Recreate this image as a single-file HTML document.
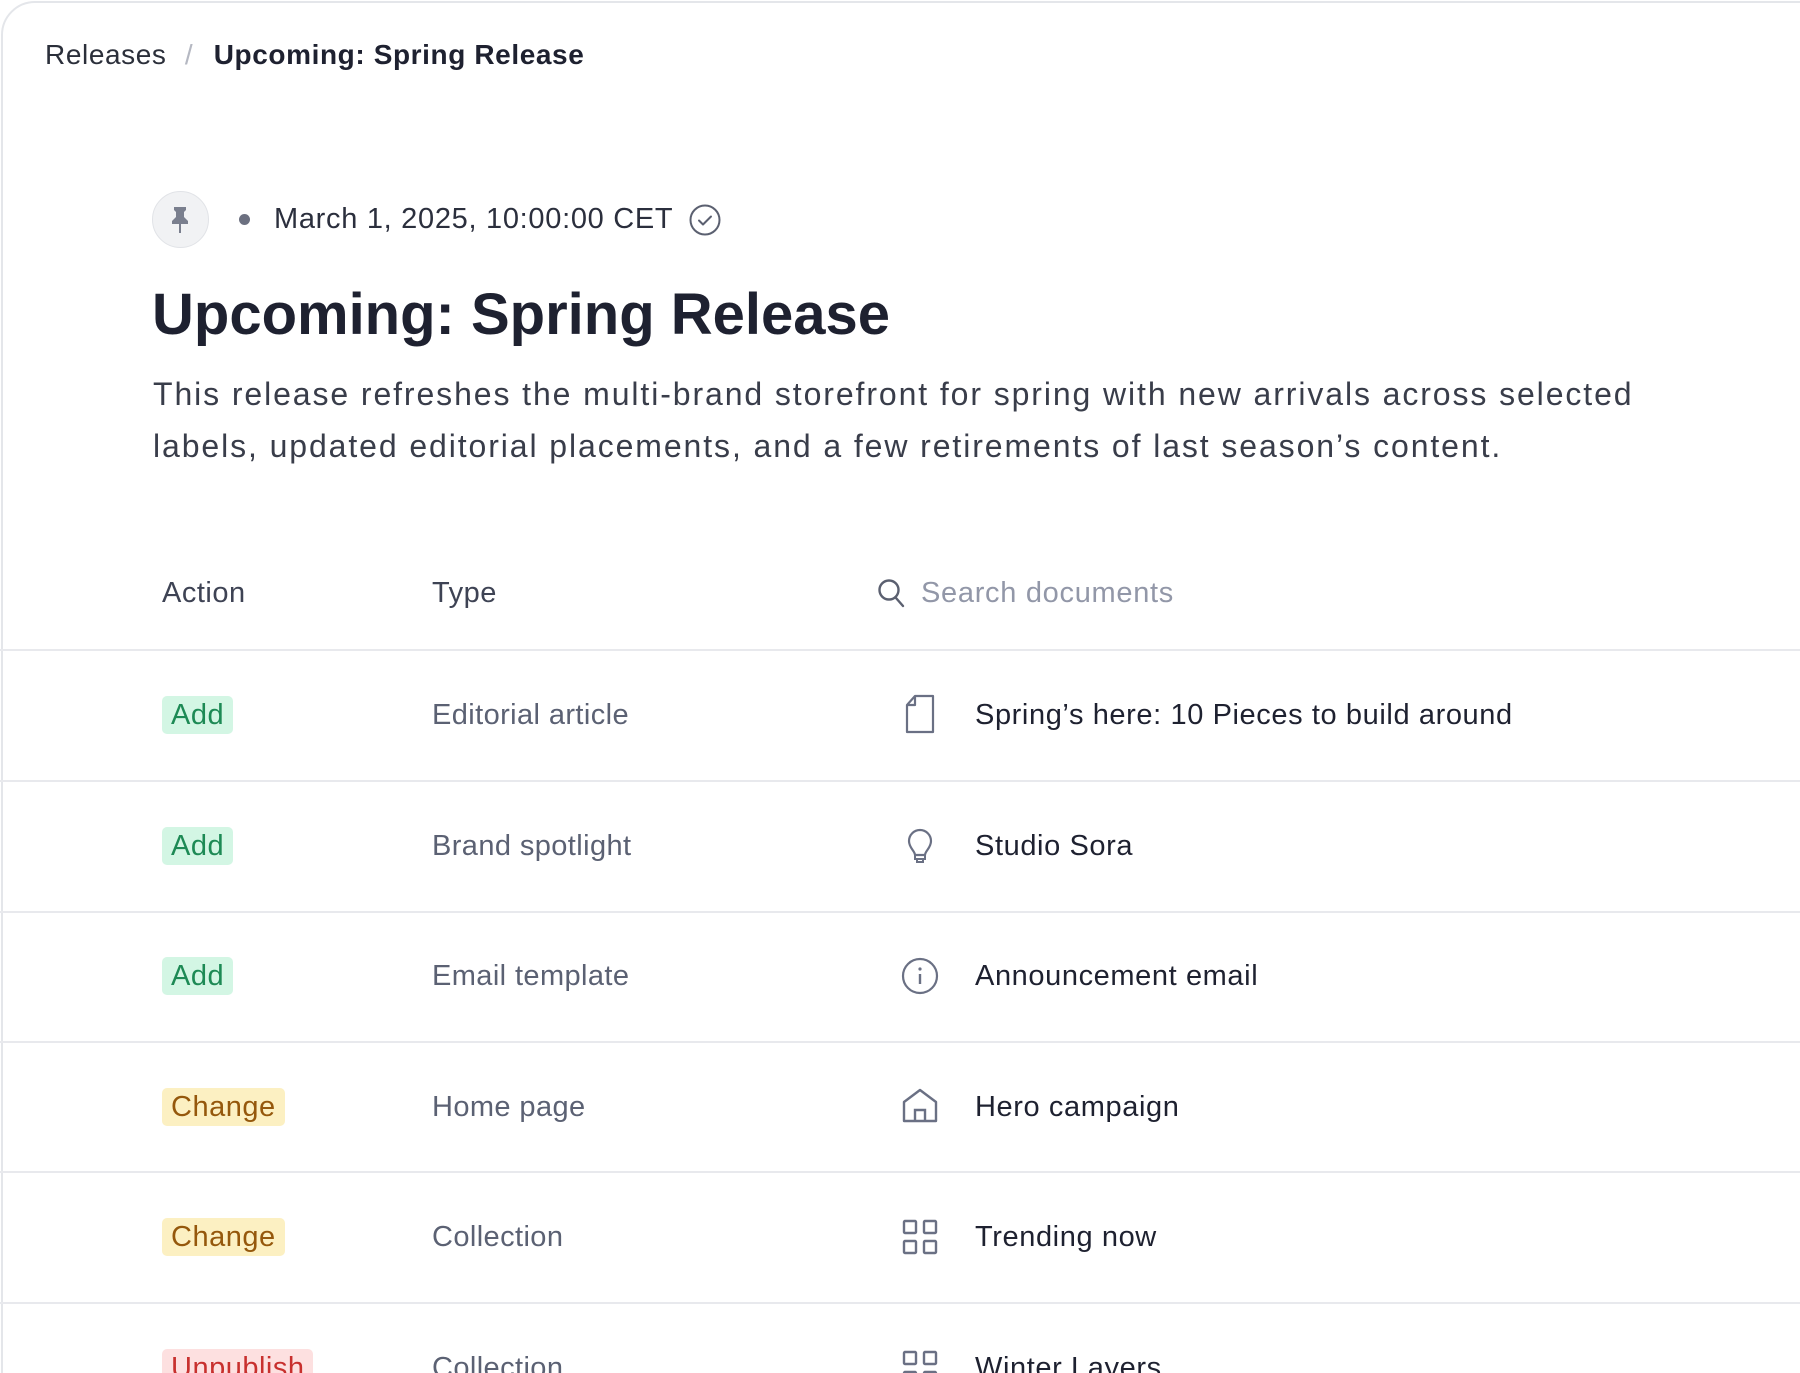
<!DOCTYPE html>
<html><head><meta charset="utf-8"><style>
html,body{margin:0;padding:0;width:1800px;height:1373px;overflow:hidden;background:#fff;font-family:"Liberation Sans",sans-serif;}
#wrap{position:relative;width:1800px;height:1373px;overflow:hidden;}
.card{position:absolute;left:1px;top:1px;width:1840px;height:1420px;border:2px solid #e4e6ea;border-radius:34px;background:#fff;}
.t{position:absolute;white-space:nowrap;line-height:1;}
.sep{position:absolute;left:0;width:1800px;height:2px;background:#e8e9ed;}
.badge{position:absolute;left:162px;height:38px;border-radius:5px;font-size:29px;line-height:38px;padding:0 9px;letter-spacing:0.5px;}
.add{background:#d3f6e4;color:#1d8a55;}
.chg{background:#fcf0c2;color:#95580c;}
.unp{background:#fde0e0;color:#c8302e;}
.type{position:absolute;left:432px;font-size:29px;color:#5b6173;line-height:1;letter-spacing:0.4px;}
.doc{position:absolute;left:975px;font-size:29px;color:#1e2130;line-height:1;letter-spacing:0.6px;}
svg.ic{position:absolute;left:900px;width:40px;height:40px;}
</style></head><body><div id="wrap">
<div class="card"></div>
<div class="t" style="left:45px;top:41px;font-size:28px;color:#2b2f3a;letter-spacing:0.6px;">Releases <span style="color:#b5b8c2;margin:0 12px 0 10px;">/</span> <span style="color:#1e2130;font-weight:bold;">Upcoming: Spring Release</span></div>

<div style="position:absolute;left:152px;top:191px;width:55px;height:55px;border-radius:50%;background:#f1f2f4;border:1px solid #e1e3e7;"></div>
<svg style="position:absolute;left:166px;top:204px" width="28" height="32" viewBox="0 0 28 32"><path d="M8 3h12v3l-2 2v5l4 4v3H6v-3l4-4V8L8 6z" fill="#7a7f8e"/><rect x="13" y="20" width="2" height="9" fill="#7a7f8e"/></svg>
<div style="position:absolute;left:239px;top:214px;width:11px;height:11px;border-radius:50%;background:#6c7080;"></div>
<div class="t" style="left:274px;top:205px;font-size:29px;color:#2b2f3d;letter-spacing:0.7px;">March 1, 2025, 10:00:00 CET</div>
<svg style="position:absolute;left:688px;top:203px" width="34" height="34" viewBox="0 0 34 34"><circle cx="17" cy="17" r="14.5" fill="none" stroke="#5b6070" stroke-width="2"/><path d="M11 17.5l4 4 8-8" fill="none" stroke="#5b6070" stroke-width="2" stroke-linecap="round" stroke-linejoin="round"/></svg>

<div class="t" style="left:152px;top:286px;font-size:58px;font-weight:bold;color:#1e2130;">Upcoming: Spring Release</div>
<div style="position:absolute;left:153px;top:368px;width:1560px;font-size:32px;line-height:52px;color:#393d4a;letter-spacing:1.9px;">This release refreshes the multi-brand storefront for spring with new arrivals across selected labels, updated editorial placements, and a few retirements of last season’s content.</div>

<div class="t" style="left:162px;top:579px;font-size:29px;color:#3e4354;letter-spacing:0.5px;">Action</div>
<div class="t" style="left:432px;top:579px;font-size:29px;color:#3e4354;letter-spacing:0.5px;">Type</div>
<svg style="position:absolute;left:876px;top:577px" width="32" height="34" viewBox="0 0 32 34"><circle cx="13" cy="13" r="9.5" fill="none" stroke="#5b6070" stroke-width="2.4"/><path d="M20 21l7 8" stroke="#5b6070" stroke-width="2.4" stroke-linecap="round"/></svg>
<div class="t" style="left:921px;top:579px;font-size:29px;color:#9297a8;letter-spacing:0.7px;">Search documents</div>

<div class="sep" style="top:649px"></div>
<div class="sep" style="top:780px"></div>
<div class="sep" style="top:911px"></div>
<div class="sep" style="top:1041px"></div>
<div class="sep" style="top:1171px"></div>
<div class="sep" style="top:1302px"></div>

<div class="badge add" style="top:696px">Add</div>
<div class="type" style="top:701px">Editorial article</div>
<svg class="ic" style="top:694px" viewBox="0 0 40 40"><path d="M7 11l8-9h18v36H7z M7 11h8V2" fill="none" stroke="#6a7084" stroke-width="2.2" stroke-linejoin="round"/></svg>
<div class="doc" style="top:701px">Spring’s here: 10 Pieces to build around</div>

<div class="badge add" style="top:827px">Add</div>
<div class="type" style="top:832px">Brand spotlight</div>
<svg class="ic" style="top:827px" viewBox="0 0 40 40"><path d="M15 28c0-4-6-7-6-14a11 11 0 0 1 22 0c0 7-6 10-6 14z" fill="none" stroke="#6a7084" stroke-width="2.2" stroke-linejoin="round"/><path d="M15 28h10v4H15z M17 32h6v3h-6z" fill="none" stroke="#6a7084" stroke-width="2"/></svg>
<div class="doc" style="top:832px">Studio Sora</div>

<div class="badge add" style="top:957px">Add</div>
<div class="type" style="top:962px">Email template</div>
<svg class="ic" style="top:956px" viewBox="0 0 40 40"><circle cx="20" cy="20" r="17" fill="none" stroke="#6a7084" stroke-width="2.2"/><circle cx="20" cy="13" r="1.6" fill="#6a7084"/><path d="M20 18v10" stroke="#6a7084" stroke-width="2.4"/></svg>
<div class="doc" style="top:962px">Announcement email</div>

<div class="badge chg" style="top:1088px">Change</div>
<div class="type" style="top:1093px">Home page</div>
<svg class="ic" style="top:1086px" viewBox="0 0 40 40"><path d="M4 16L20 4l16 12v19H4z" fill="none" stroke="#6a7084" stroke-width="2.4" stroke-linejoin="round"/><path d="M15 35V24h10v11" fill="none" stroke="#6a7084" stroke-width="2.4"/></svg>
<div class="doc" style="top:1093px">Hero campaign</div>

<div class="badge chg" style="top:1218px">Change</div>
<div class="type" style="top:1223px">Collection</div>
<svg class="ic" style="top:1217px" viewBox="0 0 40 40"><g fill="none" stroke="#6a7084" stroke-width="2.4"><rect x="4" y="4" width="12" height="12" rx="1"/><rect x="24" y="4" width="12" height="12" rx="1"/><rect x="4" y="24" width="12" height="12" rx="1"/><rect x="24" y="24" width="12" height="12" rx="1"/></g></svg>
<div class="doc" style="top:1223px">Trending now</div>

<div class="badge unp" style="top:1349px">Unpublish</div>
<div class="type" style="top:1354px">Collection</div>
<svg class="ic" style="top:1348px" viewBox="0 0 40 40"><g fill="none" stroke="#6a7084" stroke-width="2.4"><rect x="4" y="4" width="12" height="12" rx="1"/><rect x="24" y="4" width="12" height="12" rx="1"/><rect x="4" y="24" width="12" height="12" rx="1"/><rect x="24" y="24" width="12" height="12" rx="1"/></g></svg>
<div class="doc" style="top:1354px">Winter Layers</div>
</div></body></html>
